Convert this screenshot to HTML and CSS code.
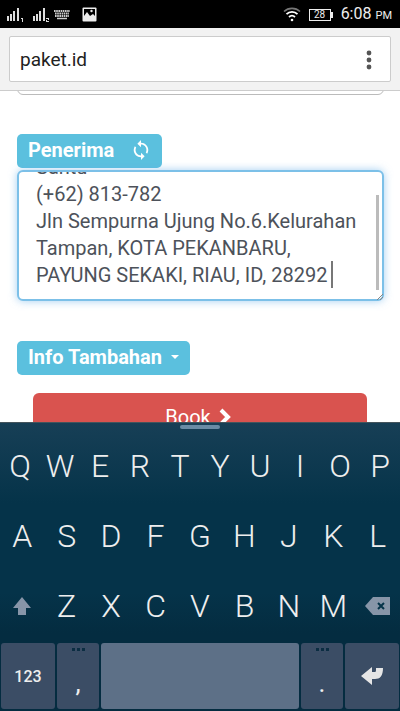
FILE: index.html
```
<!DOCTYPE html>
<html lang="id">
<head>
<meta charset="utf-8">
<meta name="viewport" content="width=device-width, initial-scale=1">
<title>paket.id</title>
<link rel="stylesheet" href="styles.css">
</head>
<body>
<div class="phone">
  <header class="status">
    <div class="status-group">
      <svg class="signal" width="18" height="16" viewBox="0 0 18 16" aria-hidden="true"><path d="M1 9h2v5H1zM4 7h2v7H4zM7 4h2v10H7zM11 1h2v13h-2z"/><path d="M15 11h2v4h-1v-3h-1z"/></svg>
      <svg class="signal" width="18" height="16" viewBox="0 0 18 16" aria-hidden="true"><path d="M1 9h2v5H1zM4 7h2v7H4zM7 4h2v10H7zM11 1h2v13h-2z"/><path d="M14 11h3v2h-2v1h2v1h-3v-2h2v-1h-2z"/></svg>
      <svg class="keys" width="16" height="10" viewBox="0 0 16 10" aria-hidden="true"><path d="M0 1h16M1 3.500h14M1 6h14" stroke="#ccc" stroke-width="2" stroke-dasharray="1.600 .6"/><path d="M3 8.500h10" stroke="#ccc" stroke-width="1.500"/></svg>
      <svg class="photo" width="15" height="15" viewBox="0 0 15 15" aria-hidden="true"><rect x=".5" y=".5" width="14" height="14" rx="1" fill="#eee"/><path d="M2 2h11v7l-2-2-3 2-3-4-3 4z" fill="#000"/><circle cx="9.500" cy="4" r="1.200" fill="#eee"/></svg>
    </div>
    <div class="status-group">
      <svg width="18" height="15" viewBox="0 0 18 15" fill="none" aria-hidden="true"><path d="M1 4.500C5.500.3 12.500.3 17 4.500" stroke="#777" stroke-width="1.600"/><path d="M3.500 7.200c3-3 8-3 11 0M6 10c1.800-1.600 4.200-1.600 6 0" stroke="#fff" stroke-width="1.800"/><circle cx="9" cy="13" r="1.300" fill="#fff"/></svg>
      <span class="battery">28</span>
      <span class="clock">6:08 <small>PM</small></span>
    </div>
  </header>
  <div class="toolbar">
    <div class="omnibox">
      <input class="address" type="text" value="paket.id" aria-label="Alamat">
      <button class="more" type="button" aria-label="Menu"><svg width="6" height="20" viewBox="0 0 6 20" fill="#555" aria-hidden="true"><circle cx="3" cy="3" r="2.400"/><circle cx="3" cy="10" r="2.400"/><circle cx="3" cy="17" r="2.400"/></svg></button>
    </div>
  </div>
  <main class="page">
    <textarea class="field previous" aria-label="Pengirim"></textarea>
    <div class="tag">
      <label for="penerima">Penerima</label>
      <button class="refresh" type="button" aria-label="Muat ulang"><svg width="18" height="20" viewBox="3 1 18 22" fill="#fff" aria-hidden="true"><path d="M12 4V1L8 5l4 4V6c3.310 0 6 2.690 6 6 0 1.010-.25 1.970-.7 2.800l1.460 1.460C19.540 15.030 20 13.570 20 12c0-4.420-3.580-8-8-8zm0 14c-3.310 0-6-2.690-6-6 0-1.010.25-1.970.7-2.800L5.240 7.740C4.460 8.970 4 10.430 4 12c0 4.420 3.580 8 8 8v3l4-4-4-4v3z"/></svg></button>
    </div>
    <div class="editor">
      <textarea class="field active" id="penerima">Santu
(+62) 813-782
Jln Sempurna Ujung No.6.Kelurahan
Tampan, KOTA PEKANBARU,
PAYUNG SEKAKI, RIAU, ID, 28292</textarea>
      <span class="caret"></span>
      <span class="thumb"></span>
      <svg class="grip" width="6" height="6" viewBox="0 0 6 6" stroke="#888" aria-hidden="true"><path d="M0 6l6-6M3 6l3-3"/></svg>
    </div>
    <button class="tag info" type="button">Info Tambahan <span class="arrow"></span></button>
    <button class="book" type="button">Book <svg width="14" height="18" viewBox="0 0 14 18" fill="none" stroke="#fff" stroke-width="4" aria-hidden="true"><path d="M2 2l7 7-7 7"/></svg></button>
  </main>
  <section class="keyboard" aria-label="Papan ketik">
    <span class="handle"></span>
    <div class="row"><button>Q</button><button>W</button><button>E</button><button>R</button><button>T</button><button>Y</button><button>U</button><button>I</button><button>O</button><button>P</button></div>
    <div class="row"><button>A</button><button>S</button><button>D</button><button>F</button><button>G</button><button>H</button><button>J</button><button>K</button><button>L</button></div>
    <div class="row">
      <button aria-label="Shift"><svg width="18" height="18" viewBox="0 0 18 18" fill="#8795a8" aria-hidden="true"><path d="M9 0l9 11h-5v7H5v-7H0z"/></svg></button>
      <button>Z</button><button>X</button><button>C</button><button>V</button><button>B</button><button>N</button><button>M</button>
      <button aria-label="Hapus"><svg width="25" height="18" viewBox="0 0 25 18" aria-hidden="true"><path d="M0 9l8-9h17v18H8z" fill="#8795a8"/><path d="M13 6l6 6M19 6l-6 6" stroke="#053349" stroke-width="2"/></svg></button>
    </div>
    <div class="bottom">
      <button class="key numbers">123</button>
      <button class="key punct"><span class="dots"></span>,</button>
      <button class="key space" aria-label="Spasi"></button>
      <button class="key punct"><span class="dots"></span>.</button>
      <button class="key" aria-label="Enter"><svg width="22" height="18" viewBox="0 0 22 18" fill="#e6e6e6" aria-hidden="true"><path d="M0 9l11-9v5h3c1 0 1-1 1-4h7c0 8-3 11-8 11h-3v6z"/></svg></button>
    </div>
  </section>
</div>
<script>
  const field = document.getElementById('penerima');
  field.scrollTop = field.scrollHeight;
</script>
</body>
</html>
```
FILE: styles.css
```
* { box-sizing: border-box; }
body { margin: 0; font-family: Roboto, sans-serif; font-size: 20px; line-height: 27px; background: #fff; }
button, input, textarea { font: inherit; margin: 0; }
button { border: 0; padding: 0; background: none; color: inherit; }
svg { display: block; flex: none; }

.phone { display: flex; flex-direction: column; height: 100vh; overflow: hidden; }

.status { flex: none; display: flex; justify-content: space-between; height: 28px; padding: 1px 8px 0 6px; background: #000; color: #eee; }
.status-group { display: flex; align-items: center; gap: 8px; }
.signal { fill: #ddd; }
.keys { margin-left: -4px; }
.photo { margin-left: 4px; }
.battery { position: relative; width: 22px; height: 12px; margin-right: 2px; border: 1px solid #eee; font-size: 10px; line-height: 10px; text-align: center; }
.battery::after { content: ""; position: absolute; top: 2px; right: -3px; width: 2px; height: 6px; background: #eee; }
.clock { font-size: 16px; }
.clock small { font-size: 11px; }

.toolbar { flex: none; padding: 8px 9px; background: #f2f2f2; border-bottom: 1px solid #ccc; }
.omnibox { display: flex; align-items: center; height: 46px; padding: 1px 18px 0 10px; background: #fff; border: 1px solid #ccc; border-radius: 2px; }
.address { flex: 1; min-width: 0; padding: 0; border: 0; outline: 0; background: none; color: #222; font-size: 19px; }

.page { flex: 1; min-height: 0; overflow: hidden; display: flex; flex-direction: column; align-items: flex-start; padding: 0 16px 0 17px; }
.field { flex: none; display: block; width: 100%; height: 131px; padding: 13px 18px 11px; border: 1px solid #bbb; border-radius: 6px; outline: 0; resize: none; background: #fff; color: #4d525a; }
.previous { margin: -127px 0 39px; }
.tag { flex: none; display: flex; align-items: center; height: 34px; padding: 0 11px 2px; border-radius: 5px; background: #5bc0de; color: #fff; font-weight: 700; }
.tag .refresh { margin: 0 1px 0 18px; }
.editor { position: relative; flex: none; width: 100%; margin: 2px 0 40px; }
.active { border: 2px solid #7cc0e8; padding: 12px 17px 10px; box-shadow: 0 0 8px rgba(102, 175, 233, .6); white-space: pre; overflow: hidden; }
.caret { position: absolute; left: 314px; bottom: 13px; width: 2px; height: 27px; background: #777; }
.thumb { position: absolute; right: 5px; top: 25px; width: 3px; height: 95px; background: #bbb; }
.grip { position: absolute; right: 1px; bottom: 1px; }
.arrow { margin-left: 9px; border: 4px solid transparent; border-top-color: #fff; border-bottom: 0; }
.book { flex: none; align-self: stretch; display: flex; justify-content: center; gap: 8px; margin: 18px 17px 0 16px; padding: 11px 13px 11px 11px; border-radius: 6px; background: #d9534f; color: #fff; }
.book svg { margin-top: 4px; }

.keyboard { position: relative; flex: none; padding: 9px 0 2px; color: #eee; background: linear-gradient(#173f56 0, #053349 80px, #053349 170px, #042c40 210px, #042c40 100%); border-top: 1px solid #44545c; }
.handle { position: absolute; top: 2px; left: 50%; width: 40px; height: 4px; margin-left: -20px; border-radius: 2px; background: #6a8ca5; }
.row { display: grid; grid-auto-flow: column; grid-auto-columns: minmax(0, 1fr); height: 70px; font-size: 32px; font-weight: 300; }
.row button { display: grid; place-items: center; padding-bottom: 2px; }
.bottom { display: grid; grid-template-columns: 54fr 42fr 198fr 42fr 54fr; gap: 2px; height: 67px; padding: 1px 1px 0; }
.key { position: relative; display: grid; place-items: center; border-radius: 3px; background: #3b4d65; }
.numbers { font-size: 16px; font-weight: 500; }
.punct { padding-top: 14px; font-size: 26px; }
.space { background: #5d7087; }
.dots { position: absolute; top: 5px; left: 50%; width: 13px; height: 3px; margin-left: -6px; background: repeating-linear-gradient(90deg, #0b2d42 0, #0b2d42 3px, transparent 3px, transparent 5px); }
```
